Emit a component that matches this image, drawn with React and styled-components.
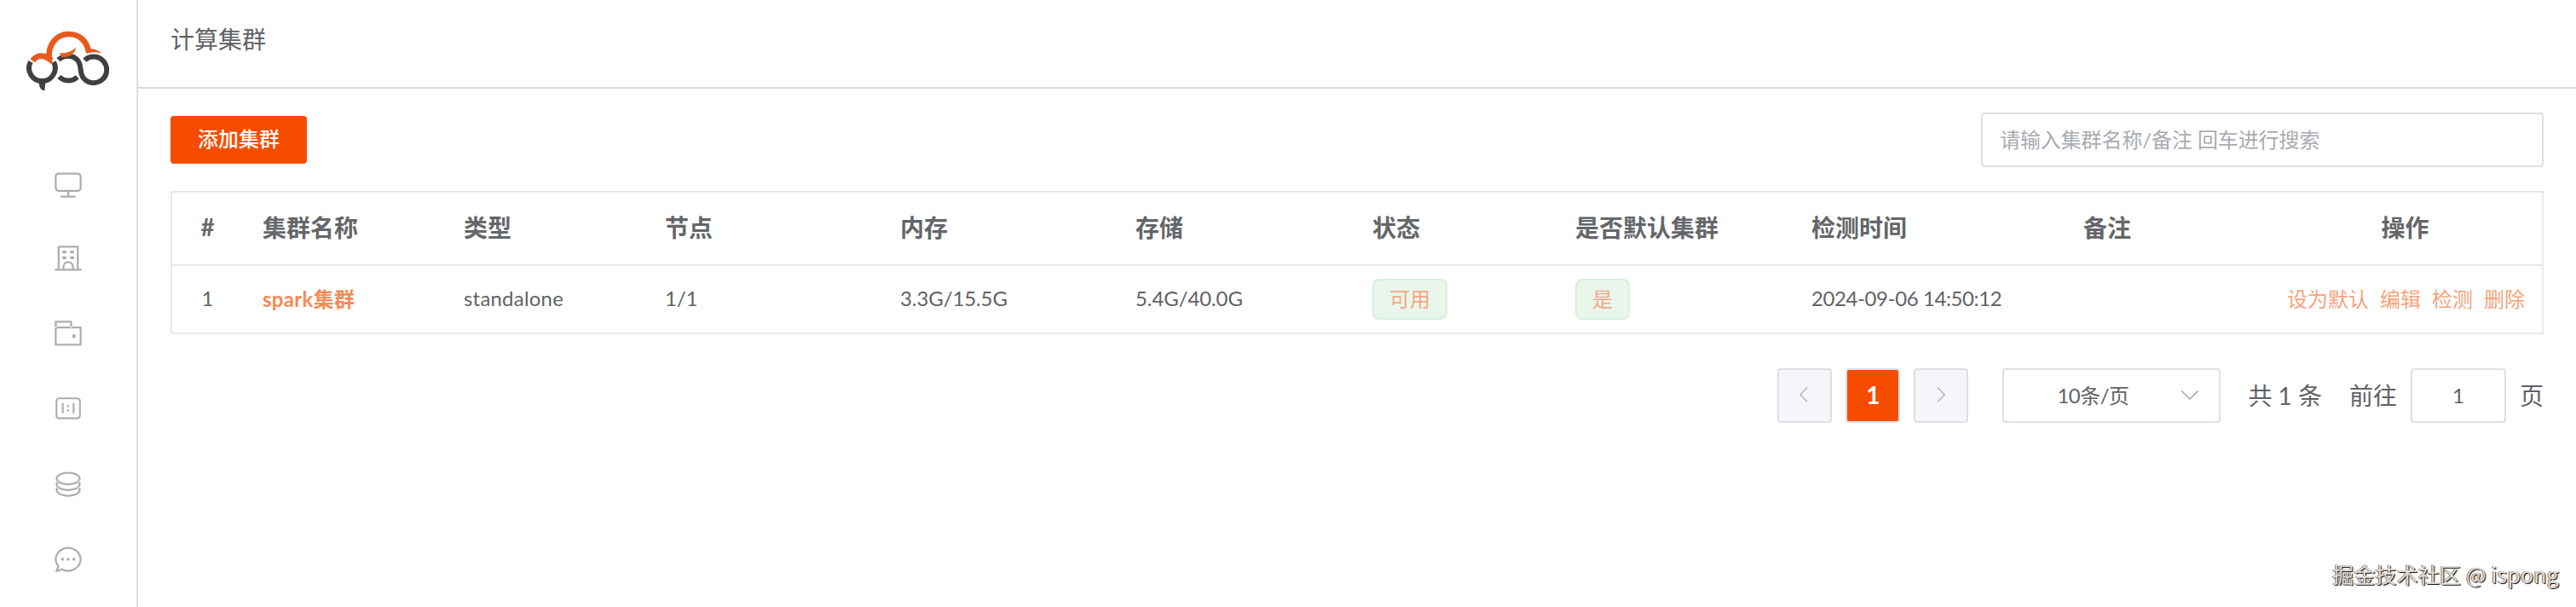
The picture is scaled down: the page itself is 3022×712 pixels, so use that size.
import React, { useState } from "react";
import styled, { createGlobalStyle, css } from "styled-components";

const GlobalStyle = createGlobalStyle`
  * {
    box-sizing: border-box;
  }
  body {
    margin: 0;
    background-color: #fff;
    color: #606266;
    font-family: Lato, "Noto Sans CJK SC", sans-serif;
    font-size: 24px;
  }
  input {
    font-family: inherit;
  }
`;

const Layout = styled.div`
  display: flex;
  width: 100%;
  height: 712px;
  overflow: hidden;
`;

const Sidebar = styled.nav`
  display: flex;
  flex-direction: column;
  align-items: center;
  flex: none;
  width: 162px;
  border-right: 2px solid #e0e0e1;
`;

const LogoBox = styled.div`
  height: 135px;
  padding: 36px 1px 0 0;
  margin-bottom: 37px;

  svg {
    display: block;
  }
`;

const MenuItem = styled.a`
  display: flex;
  align-items: center;
  justify-content: center;
  flex: none;
  width: 100%;
  height: 88px;
  color: #adadad;
`;

const Main = styled.main`
  flex: 1;
  min-width: 0;
`;

const Header = styled.header`
  height: 104px;
  padding: 25px 38px 0;
  border-bottom: 2px solid #dcdcdd;
  font-size: 28px;
  line-height: 42px;
`;

const Content = styled.section`
  padding: 28px 38px 0;
`;

const Toolbar = styled.div`
  display: flex;
  align-items: center;
  justify-content: space-between;
  height: 64px;
  margin-bottom: 28px;
`;

const Button = styled.button`
  width: 160px;
  height: 56px;
  padding: 0 0 5px;
  border: none;
  border-radius: 4px;
  background-color: #f54c00;
  color: #fff;
  font-family: inherit;
  font-size: 24px;
  font-weight: 500;
`;

const SearchInput = styled.input`
  width: 660px;
  height: 64px;
  padding: 0 20px 2px;
  border: 2px solid #dcdfe6;
  border-radius: 4px;
  outline: none;
  color: #606266;
  font-size: 24px;

  &::placeholder {
    color: #a8abb2;
    letter-spacing: -0.1px;
    opacity: 1;
  }
`;

const Table = styled.div`
  border: 2px solid #e8e8e9;
`;

const Row = styled.div`
  display: grid;
  grid-template-columns: 84px 236px 236px 276px 276px 278px 238px 277px 319px 1fr 320px;
  align-items: center;
  height: ${({ $head }) => ($head ? "86px" : "78px")};

  ${({ $head }) =>
    $head &&
    css`
      border-bottom: 2px solid #e8e8e9;
      font-size: 28px;
      font-weight: 700;
      color: #646669;
    `}
`;

const Cell = styled.div`
  padding: 0 20px 4px 22px;
  white-space: nowrap;
  letter-spacing: ${({ $spacing }) => $spacing || "normal"};
`;

const CenterCell = styled(Cell)`
  padding: 0 1px 4px 0;
  text-align: center;
`;

const TagCell = styled(Cell)`
  padding-bottom: 0;
`;

const ClusterName = styled.a`
  color: #f68a55;
  font-weight: 700;
`;

const Tag = styled.span`
  display: inline-flex;
  align-items: center;
  height: 48px;
  padding: 0 18px 3px;
  border: 2px solid #d5f0e0;
  border-radius: 8px;
  background-color: #e9f6ec;
  color: #f5a783;
  vertical-align: middle;
`;

const Actions = styled.div`
  display: flex;
  justify-content: flex-end;
  gap: 13px;
  padding: 0 20px 3px 0;
  white-space: nowrap;
`;

const Action = styled.a`
  color: #f6a37c;
`;

const Pagination = styled.div`
  display: flex;
  align-items: center;
  justify-content: flex-end;
  height: 64px;
  margin-top: 40px;
  font-size: 28px;
`;

const PageButton = styled.button`
  display: flex;
  align-items: center;
  justify-content: center;
  width: 64px;
  height: 64px;
  margin-right: 16px;
  padding: 0 0 2px;
  border: 2px solid #dcdfe6;
  border-radius: 4px;
  background-color: ${({ $active }) => ($active ? "#f54c00" : "#f4f6fa")};
  color: ${({ $active }) => ($active ? "#fff" : "#adb0b5")};
  font-family: inherit;
  font-size: 28px;
  font-weight: 700;
`;

const SizeSelect = styled.div`
  display: flex;
  align-items: center;
  justify-content: space-between;
  width: 256px;
  height: 64px;
  margin: 0 32px 0 24px;
  padding: 0 20px 3px 62px;
  border: 2px solid #dcdfe6;
  border-radius: 4px;
  font-size: 24px;
  letter-spacing: -0.5px;

  svg {
    color: #adb0b5;
  }
`;

const Total = styled.span`
  margin-right: 32px;
  padding-bottom: 3px;
`;

const Jump = styled.label`
  display: flex;
  align-items: center;
`;

const JumpText = styled.span`
  padding-bottom: 3px;
`;

const JumpInput = styled.input`
  width: 112px;
  height: 64px;
  margin: 0 16px;
  padding: 0 0 2px;
  border: 2px solid #dcdfe6;
  border-radius: 4px;
  color: #606266;
  font-size: 24px;
  text-align: center;
`;

const Watermark = styled.div`
  position: absolute;
  right: 20px;
  bottom: 21px;
  color: #dedede;
  font-family: "Noto Sans CJK SC", sans-serif;
  font-size: 25px;
  line-height: 36px;
  letter-spacing: 0.15px;
  text-shadow: -1px 0 0 #777, 1px 1px 1px #000;
`;

const Logo = () => (
  <svg width="97" height="71" viewBox="95 110 291 213" fill="none">
    <g stroke="#3f4042" strokeWidth="18">
      <path d="M110 219A46 46 0 1 0 191 220" />
      <path d="M208 213C225 194 259 195 275 214C290 232 282 253 292 271A46 46 0 1 0 300 214" />
      <path d="M210 272A46 46 0 0 0 274 273" />
    </g>
    <path d="M139 292L162 294L159 321C147 319 140 311 139 292Z" fill="#3f4042" />
    <path
      d="M117 216C131 195 155 194 175 209C170 161 199 122 244 122C283 122 309 149 314 185"
      stroke="#e85a1c"
      strokeWidth="20"
    />
    <path d="M170 190L189 207L179 223L163 211Z" fill="#e85a1c" />
    <path d="M304 176C322 171 344 175 359 189C341 184 324 184 307 191Z" fill="#e85a1c" />
    <path d="M212 188C232 192 254 185 270 168C266 192 246 206 219 203Z" fill="#e85a1c" />
  </svg>
);

const icons = [
  {
    name: "monitor",
    d: "M544 768v128h192a32 32 0 1 1 0 64H288a32 32 0 1 1 0-64h192V768H192A128 128 0 0 1 64 640V256a128 128 0 0 1 128-128h640a128 128 0 0 1 128 128v384a128 128 0 0 1-128 128H544zM192 192a64 64 0 0 0-64 64v384a64 64 0 0 0 64 64h640a64 64 0 0 0 64-64V256a64 64 0 0 0-64-64H192z",
  },
  {
    name: "school",
    d: "M160 96a32 32 0 0 1 32-32h640a32 32 0 0 1 32 32v736h96v64H64v-64h96V96zM224 128v704h96v-64a192 192 0 0 1 384 0v64h96V128H224zM384 832h256v-64a128 128 0 0 0-256 0v64zM320 224h128v96H320zM576 224h128v96H576zM320 416h128v96H320zM576 416h128v96H576z",
  },
  {
    name: "wallet",
    d: "M640 288h-64V128H128v160H64V96a32 32 0 0 1 32-32h512a32 32 0 0 1 32 32v160zM128 320v512h768V320H128zm-32-64h832a32 32 0 0 1 32 32v576a32 32 0 0 1-32 32H96a32 32 0 0 1-32-32V288a32 32 0 0 1 32-32zM704 640a64 64 0 1 1 0-128 64 64 0 0 1 0 128z",
  },
  {
    name: "scale",
    d: "M813.176 180.706a60.235 60.235 0 0 1 60.236 60.235v481.883a60.235 60.235 0 0 1-60.236 60.235H210.824a60.235 60.235 0 0 1-60.236-60.235V240.94a60.235 60.235 0 0 1 60.236-60.235h602.352zm0-60.235H210.824A120.47 120.47 0 0 0 90.353 240.94v481.883a120.47 120.47 0 0 0 120.47 120.47h602.353a120.47 120.47 0 0 0 120.471-120.47V240.94a120.47 120.47 0 0 0-120.47-120.47zm-120.47 180.705a30.118 30.118 0 0 0-30.118 30.118v301.177a30.118 30.118 0 0 0 60.236 0V331.294a30.118 30.118 0 0 0-30.118-30.118zm-361.412 0a30.118 30.118 0 0 0-30.118 30.118v301.177a30.118 30.118 0 1 0 60.236 0V331.294a30.118 30.118 0 0 0-30.118-30.118zM512 361.412a30.118 30.118 0 0 0-30.118 30.117v30.118a30.118 30.118 0 0 0 60.236 0V391.53A30.118 30.118 0 0 0 512 361.412zM512 512a30.118 30.118 0 0 0-30.118 30.118v30.117a30.118 30.118 0 0 0 60.236 0v-30.117A30.118 30.118 0 0 0 512 512z",
  },
  {
    name: "coin",
    d: "m161.92 580.736 29.888 58.88C171.328 659.776 160 681.728 160 704c0 82.304 155.328 160 352 160s352-77.696 352-160c0-22.272-11.392-44.16-31.808-64.32l30.464-58.432C903.936 615.808 928 657.664 928 704c0 129.728-188.544 224-416 224S96 833.728 96 704c0-46.592 24.32-88.576 65.92-123.264zM161.92 388.736l29.888 58.88C171.328 467.776 160 489.728 160 512c0 82.304 155.328 160 352 160s352-77.696 352-160c0-22.272-11.392-44.16-31.808-64.32l30.464-58.432C903.936 423.808 928 465.664 928 512c0 129.728-188.544 224-416 224S96 641.728 96 512c0-46.592 24.32-88.576 65.92-123.264zM512 544c-227.456 0-416-94.272-416-224S284.544 96 512 96s416 94.272 416 224-188.544 224-416 224zm0-64c196.672 0 352-77.696 352-160S708.672 160 512 160s-352 77.696-352 160 155.328 160 352 160z",
  },
  {
    name: "chat",
    d: "m174.72 855.68 135.04-45.056 23.68 11.84C388.096 849.536 448.576 864 512 864c211.84 0 384-166.784 384-352S723.84 160 512 160 128 326.784 128 512c0 69.12 24.96 139.264 70.848 199.232l22.08 28.8-46.272 115.584zm-45.248 82.56A32 32 0 0 1 89.6 896l58.368-145.92C94.72 680.32 64 596.864 64 512 64 299.904 256 96 512 96s448 203.904 448 416-192 416-448 416a461.056 461.056 0 0 1-206.912-48.384l-175.616 58.56zM512 563.2a51.2 51.2 0 1 1 0-102.4 51.2 51.2 0 0 1 0 102.4zm192 0a51.2 51.2 0 1 1 0-102.4 51.2 51.2 0 0 1 0 102.4zm-384 0a51.2 51.2 0 1 1 0-102.4 51.2 51.2 0 0 1 0 102.4z",
  },
];

const arrows = {
  left: "M609.4 149.4 277 489.6a32 32 0 0 0 0 44.7l332 340.3a29 29 0 0 0 41.7 0 30.6 30.6 0 0 0 0-42.7L339 512l311.9-319.9a30.6 30.6 0 0 0 0-42.7 29 29 0 0 0-41.5 0z",
  right:
    "M340.9 149.3a30.6 30.6 0 0 0 0 42.7L652.7 512 340.9 831.9a30.6 30.6 0 0 0 0 42.7 29 29 0 0 0 41.7 0L714.2 534.3a32 32 0 0 0 0-44.6L382.6 149.4a29 29 0 0 0-41.7 0z",
  down: "M831.9 340.9 512 652.7 192.1 340.9a30.6 30.6 0 0 0-42.7 0 29 29 0 0 0 0 41.7L489.7 714.2a32 32 0 0 0 44.6 0l340.3-331.6a29 29 0 0 0 0-41.7 30.6 30.6 0 0 0-42.7 0z",
};

const Icon = ({ d, size }) => (
  <svg width={size} height={size} viewBox="0 0 1024 1024" fill="currentColor">
    <path fillRule="evenodd" d={d} />
  </svg>
);

const columns = [
  "集群名称",
  "类型",
  "节点",
  "内存",
  "存储",
  "状态",
  "是否默认集群",
  "检测时间",
  "备注",
];

const actions = ["设为默认", "编辑", "检测", "删除"];

export default function App() {
  const [keyword, setKeyword] = useState("");
  const [page, setPage] = useState("1");

  return (
    <Layout>
      <GlobalStyle />
      <Sidebar>
        <LogoBox>
          <Logo />
        </LogoBox>
        {icons.map((icon) => (
          <MenuItem key={icon.name}>
            <Icon d={icon.d} size={36} />
          </MenuItem>
        ))}
      </Sidebar>
      <Main>
        <Header>计算集群</Header>
        <Content>
          <Toolbar>
            <Button>添加集群</Button>
            <SearchInput
              placeholder="请输入集群名称/备注 回车进行搜索"
              value={keyword}
              onChange={(e) => setKeyword(e.target.value)}
            />
          </Toolbar>
          <Table>
            <Row $head>
              <CenterCell>#</CenterCell>
              {columns.map((column) => (
                <Cell key={column}>{column}</Cell>
              ))}
              <CenterCell>操作</CenterCell>
            </Row>
            <Row>
              <CenterCell>1</CenterCell>
              <Cell $spacing="0.3px">
                <ClusterName>spark集群</ClusterName>
              </Cell>
              <Cell $spacing="0.2px">standalone</Cell>
              <Cell>1/1</Cell>
              <Cell $spacing="-0.1px">3.3G/15.5G</Cell>
              <Cell $spacing="-0.1px">5.4G/40.0G</Cell>
              <TagCell>
                <Tag>可用</Tag>
              </TagCell>
              <TagCell>
                <Tag>是</Tag>
              </TagCell>
              <Cell $spacing="-0.4px">2024-09-06 14:50:12</Cell>
              <Cell />
              <Actions>
                {actions.map((action) => (
                  <Action key={action}>{action}</Action>
                ))}
              </Actions>
            </Row>
          </Table>
          <Pagination>
            <PageButton>
              <Icon d={arrows.left} size={24} />
            </PageButton>
            <PageButton $active>1</PageButton>
            <PageButton>
              <Icon d={arrows.right} size={24} />
            </PageButton>
            <SizeSelect>
              10条/页
              <Icon d={arrows.down} size={28} />
            </SizeSelect>
            <Total>共 1 条</Total>
            <Jump>
              <JumpText>前往</JumpText>
              <JumpInput value={page} onChange={(e) => setPage(e.target.value)} />
              <JumpText>页</JumpText>
            </Jump>
          </Pagination>
        </Content>
      </Main>
      <Watermark>掘金技术社区 @ ispong</Watermark>
    </Layout>
  );
}
